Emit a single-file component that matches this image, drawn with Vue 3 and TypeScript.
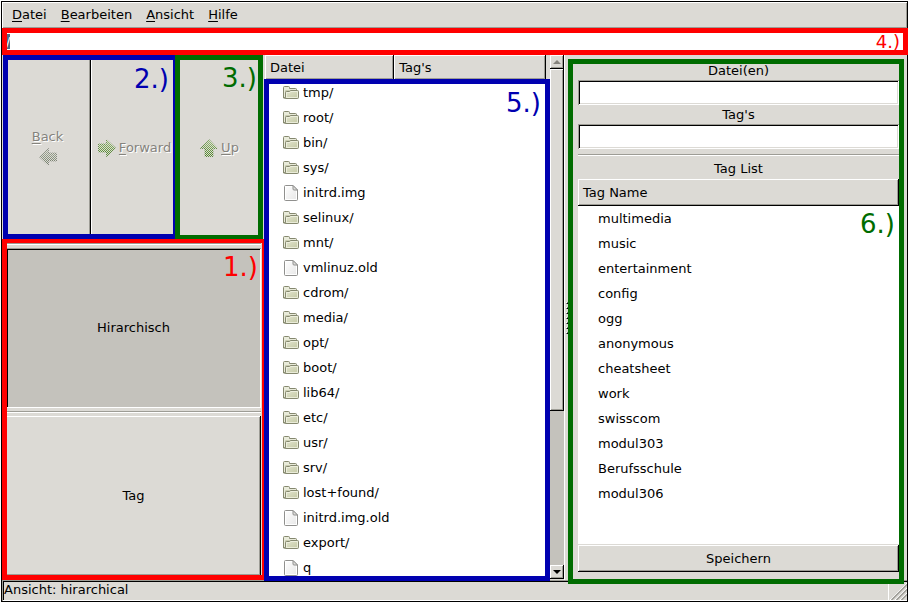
<script setup lang="ts">
import { onMounted, ref } from 'vue'

interface Entry {
  name: string
  folder: boolean
}

const menus: string[] = ['Datei', 'Bearbeiten', 'Ansicht', 'Hilfe']

const names: string[] = [
  'tmp/', 'root/', 'bin/', 'sys/', 'initrd.img', 'selinux/', 'mnt/',
  'vmlinuz.old', 'cdrom/', 'media/', 'opt/', 'boot/', 'lib64/', 'etc/',
  'usr/', 'srv/', 'lost+found/', 'initrd.img.old', 'export/', 'q',
]
const entries: Entry[] = names.map((name) => ({ name, folder: name.endsWith('/') }))

const tags: string[] = [
  'multimedia', 'music', 'entertainment', 'config', 'ogg', 'anonymous',
  'cheatsheet', 'work', 'swisscom', 'modul303', 'Berufsschule', 'modul306',
]

const path = ref('/')
const fileNames = ref('')
const fileTags = ref('')
const mode = ref<'tree' | 'tag'>('tree')
const pathInput = ref<HTMLInputElement | null>(null)

onMounted(() => {
  pathInput.value?.focus()
  pathInput.value?.select()
})
</script>

<template>
  <div class="window">
    <svg class="defs" aria-hidden="true">
      <defs>
        <pattern id="dither" width="2" height="2" patternUnits="userSpaceOnUse">
          <rect width="1" height="1" fill="#dcdad5" />
          <rect x="1" y="1" width="1" height="1" fill="#dcdad5" />
        </pattern>
        <linearGradient id="arrow-green" x2="0" y2="1">
          <stop offset="0" stop-color="#9cc07c" />
          <stop offset="1" stop-color="#4c8423" />
        </linearGradient>
        <linearGradient id="arrow-gray" x2="0" y2="1">
          <stop offset="0" stop-color="#a9b39f" />
          <stop offset="1" stop-color="#6f7a66" />
        </linearGradient>
        <linearGradient id="folder-front" x2="1" y2="1">
          <stop offset="0" stop-color="#e4e6d2" />
          <stop offset="1" stop-color="#c3c8a2" />
        </linearGradient>
        <linearGradient id="paper" x2="1" y2="1">
          <stop offset="0" stop-color="#fff" />
          <stop offset="1" stop-color="#e6e6e6" />
        </linearGradient>
      </defs>
    </svg>

    <nav class="menubar">
      <button v-for="m in menus" :key="m" type="button" class="menu"><u>{{ m.charAt(0) }}</u>{{ m.slice(1) }}</button>
    </nav>

    <div class="location">
      <input ref="pathInput" v-model="path" class="path" type="text" aria-label="Pfad" spellcheck="false" />
      <div class="frame red f4"><span class="num small">4.)</span></div>
    </div>

    <main class="main">
      <section class="side">
        <div class="toolbar">
          <div class="history">
            <button type="button" class="raised tool stacked" disabled>
              <span><u>B</u>ack</span>
              <svg class="arrow" viewBox="0 0 18 18" aria-hidden="true">
                <path d="M0.500 9 9.500 0.500v4.500h8v8h-8v4.500z" fill="url(#arrow-gray)" />
                <path d="M0.500 9 9.500 0.500v4.500h8v8h-8v4.500z" fill="none" stroke="#6b6f66" stroke-opacity="0.6" />
                <path d="M0 0h18v18H0z" fill="url(#dither)" />
              </svg>
            </button>
            <button type="button" class="raised tool" disabled>
              <svg class="arrow" viewBox="0 0 18 18" aria-hidden="true">
                <path d="M17.500 9 8.500 0.500v4.500h-8v8h8v4.500z" fill="url(#arrow-green)" />
                <path d="M17.500 9 8.500 0.500v4.500h-8v8h8v4.500z" fill="none" stroke="#3b6e1d" stroke-opacity="0.6" />
                <path d="M0 0h18v18H0z" fill="url(#dither)" />
              </svg>
              <span><u>F</u>orward</span>
            </button>
            <div class="frame blue f2"><span class="num">2.)</span></div>
          </div>
          <div class="up">
            <button type="button" class="raised tool" disabled>
              <svg class="arrow" viewBox="0 0 18 18" aria-hidden="true">
                <path d="M9 0.500 17.500 9.500H13v8H5v-8H0.500z" fill="url(#arrow-green)" />
                <path d="M9 0.500 17.500 9.500H13v8H5v-8H0.500z" fill="none" stroke="#3b6e1d" stroke-opacity="0.6" />
                <path d="M0 0h18v18H0z" fill="url(#dither)" />
              </svg>
              <span><u>U</u>p</span>
            </button>
            <div class="frame green f3"><span class="num">3.)</span></div>
          </div>
        </div>

        <div class="modes">
          <hr />
          <button type="button" class="raised mode" :class="{ pressed: mode === 'tree' }" @click="mode = 'tree'">Hirarchisch</button>
          <hr />
          <button type="button" class="raised mode" :class="{ pressed: mode === 'tag' }" @click="mode = 'tag'">Tag</button>
          <div class="frame red f1"><span class="num">1.)</span></div>
        </div>
      </section>

      <section class="browser">
        <div class="files">
          <table class="list file-table">
            <thead>
              <tr><th class="col-name">Datei</th><th>Tag's</th></tr>
            </thead>
            <tbody>
              <tr v-for="e in entries" :key="e.name">
                <td>
                  <div class="entry">
                    <svg v-if="e.folder" class="icon" viewBox="0 0 16 16" aria-hidden="true">
                      <path d="M0.500 13V2.500q0-1 1-1h4q1 0 1 1v1h6q1 0 1 1V13z" fill="#e9ebda" stroke="#85886f" />
                      <path d="M2.500 12V5.500h9.500" fill="none" stroke="#c9ccb0" />
                      <path d="M2.500 12.500V7.500q0-1 1-1h3l1-1h7q1 0 1 1v6q0 1-1 1h-12q-1 0-1-1z" fill="url(#folder-front)" stroke="#85886f" />
                      <path d="M3.500 12.500V7.500H7l1-1h6.500v6z" fill="none" stroke="#f1f3e4" stroke-opacity="0.8" />
                    </svg>
                    <svg v-else class="icon" viewBox="0 0 16 16" aria-hidden="true">
                      <path d="M1.500 1.500q0-1 1-1H10l4.500 4.500v9.500q0 1-1 1h-11q-1 0-1-1z" fill="url(#paper)" stroke="#90908e" />
                      <path d="M2.500 14.500v-13H9.500M2.500 14.500h11V6" fill="none" stroke="#fff" />
                      <path d="M10 0.500v3.500q0 1 1 1h3.500z" fill="#dededc" stroke="#90908e" />
                    </svg>
                    <span>{{ e.name }}</span>
                  </div>
                </td>
                <td></td>
              </tr>
            </tbody>
          </table>
          <div class="frame blue f5"><span class="num">5.)</span></div>
        </div>
        <div class="scrollbar">
          <button type="button" class="raised step" aria-label="Nach oben">
            <svg viewBox="0 0 8 4" aria-hidden="true"><path d="M4 0 8 4H0z" fill="#85837d" /></svg>
          </button>
          <div class="trough"><div class="raised thumb"></div></div>
          <button type="button" class="raised step" aria-label="Nach unten">
            <svg viewBox="0 0 8 4" aria-hidden="true"><path d="M0 0h8L4 4z" fill="#000" /></svg>
          </button>
        </div>
      </section>

      <div class="splitter"><i v-for="n in 7" :key="n"></i></div>

      <section class="editor">
        <label class="caption" for="file-names">Datei(en)</label>
        <input id="file-names" v-model="fileNames" class="field" type="text" />
        <label class="caption" for="file-tags">Tag's</label>
        <input id="file-tags" v-model="fileTags" class="field" type="text" />
        <hr />
        <h2 class="title">Tag List</h2>
        <div class="tag-list">
          <table class="list tag-table">
            <thead>
              <tr><th>Tag Name</th></tr>
            </thead>
            <tbody>
              <tr v-for="t in tags" :key="t"><td>{{ t }}</td></tr>
            </tbody>
          </table>
        </div>
        <button type="button" class="raised save">Speichern</button>
        <div class="frame green f6"><span class="num">6.)</span></div>
      </section>
    </main>

    <footer class="status">
      <span class="message">Ansicht: hirarchical</span>
      <svg class="grip" viewBox="0 0 18 18" aria-hidden="true">
        <path d="M1 18 18 1M6 18 18 6M11 18 18 11" stroke="#fff" stroke-width="1" />
        <path d="M2.500 18 18 2.500M7.500 18 18 7.500M12.500 18l5.500-5.500" stroke="#9d9c95" stroke-width="1.500" />
      </svg>
    </footer>
  </div>
</template>

<style>
body {
  margin: 0;
  background: #fff;
}
</style>

<style scoped>
* {
  box-sizing: border-box;
}

.window {
  display: flex;
  flex-direction: column;
  height: calc(100vh - 2px);
  margin: 1px;
  border: 1px solid #000;
  background: #dcdad5;
  color: #000;
  font: 13px/16px "DejaVu Sans", sans-serif;
}

.defs {
  position: absolute;
  width: 0;
  height: 0;
}

button,
input {
  margin: 0;
  padding: 0;
  border: 0;
  border-radius: 0;
  outline: none;
  background: none;
  color: inherit;
  font: inherit;
}

u {
  text-underline-offset: 2px;
}

hr {
  flex: none;
  width: 100%;
  height: 2px;
  margin: 0;
  border: 0;
  border-top: 1px solid #9d9c95;
  background: #fff;
}

.raised {
  background: #dcdad5;
  box-shadow: inset -1px -1px #000, inset 1px 1px #fff, inset -2px -2px #9d9c95;
}

/* Numbered callouts */
.frame {
  position: absolute;
  z-index: 2;
  border: 5px solid;
  pointer-events: none;
}

.red { color: #f00; }
.blue { color: #0000b0; }
.green { color: #006c00; }

.num {
  position: absolute;
  top: 5px;
  right: 4px;
  font-size: 26px;
  line-height: 28px;
}

.small {
  top: 0;
  right: 3px;
  font-size: 18px;
  line-height: 18px;
}

.f1 { inset: -1px -3px 0 0; border-top-width: 4px; }
.f1 .num { top: 10px; }
.f2 { inset: 0 0 1px -1px; }
.f3 { inset: 0 -2px 0 -3px; }
.f3 .num { top: 4px; right: 1px; }
.f4 { inset: 0 -1px 0 0; }
.f5 { inset: 24px 0 -1px 0; }
.f6 { inset: 4px 3px -4px -1px; }
.f6 .num { top: 146px; }

/* Menu and path */
.menubar {
  display: flex;
  flex: none;
  height: 26px;
  padding-left: 3px;
  box-shadow: inset 1px 1px #fff, inset -1px -1px #9d9c95;
}

.menu {
  padding: 0 7px;
}

.location {
  position: relative;
  flex: none;
  height: 27px;
  background: #fff;
}

.path {
  display: block;
  width: 100%;
  height: 27px;
  padding: 0 4px;
}

.path::selection {
  background: #4b6983;
  color: #fff;
}

/* Body */
.main {
  display: flex;
  flex: 1;
  min-height: 0;
}

.side {
  display: grid;
  grid-template-rows: 185fr 340fr;
  flex: none;
  width: 262px;
}

.toolbar {
  display: flex;
  padding: 0 3px 0 2px;
}

.history,
.up {
  position: relative;
  display: flex;
}

.history { flex: 174; }
.up { flex: 83; }

.tool {
  display: flex;
  flex: 1;
  align-items: center;
  justify-content: center;
  gap: 3px;
  color: #85837d;
  text-shadow: 1px 1px #fff;
}

.stacked {
  flex-direction: column;
}

.arrow {
  flex: none;
  width: 18px;
  height: 18px;
}

.modes {
  position: relative;
  display: flex;
  flex-direction: column;
  gap: 3px;
  padding: 3px 3px 4px 4px;
}

.mode {
  flex: 1;
}

.pressed {
  background: #c4c2bc;
  box-shadow: inset 0 1px #9d9c95, inset -1px -1px #fff, inset 2px 2px #000;
}

/* Tables */
.list {
  width: 100%;
  border-collapse: separate;
  border-spacing: 0;
  table-layout: fixed;
  background: #fff;
}

.list th {
  height: 27px;
  padding: 0 5px;
  background: #dcdad5;
  box-shadow: inset -1px -1px #000, inset 1px 1px #fff, inset -2px -2px #9d9c95;
  font-weight: normal;
  text-align: left;
}

.list td {
  height: 25px;
  padding: 0 0 0 20px;
}

.browser {
  display: flex;
  flex: none;
  width: 300px;
}

.files {
  position: relative;
  flex: 1;
  padding: 0 4px 0 1px;
  height: 100%;
  contain: size;
}

.file-table {
  display: block;
  height: 100%;
  overflow: hidden;
}

.file-table thead,
.file-table tbody {
  display: table;
  width: 100%;
  table-layout: fixed;
}

.file-table th {
  height: 25px;
}

.file-table .col-name {
  width: 46%;
}

.file-table td {
  padding-left: 18px;
}

.entry {
  display: flex;
  align-items: center;
  gap: 4px;
}

.icon {
  flex: none;
  width: 16px;
  height: 16px;
}

.scrollbar {
  display: flex;
  flex-direction: column;
  width: 14px;
  padding-bottom: 1px;
}

.step {
  display: flex;
  flex: none;
  align-items: center;
  justify-content: center;
  height: 14px;
}

.step svg {
  width: 8px;
  height: 4px;
}

.trough {
  flex: 1;
  background: #c4c2bc;
}

.thumb {
  height: 69%;
}

.splitter {
  display: flex;
  flex: none;
  flex-direction: column;
  align-items: flex-end;
  justify-content: center;
  gap: 3px;
  width: 5px;
  padding-right: 1px;
  border-left: 1px solid #fff;
}

.splitter i {
  width: 2px;
  height: 2px;
  border: 1px solid #fff;
  border-right-color: #000;
  border-bottom-color: #000;
}

/* Tag editor */
.editor {
  position: relative;
  display: flex;
  flex: 1;
  flex-direction: column;
  min-width: 0;
  padding: 6px 8px 8px 9px;
}

.caption {
  height: 19px;
  line-height: 19px;
  text-align: center;
}

.field {
  flex: none;
  width: 100%;
  height: 25px;
  padding: 0 4px;
  background: #fff;
  box-shadow: inset 0 1px #9d9c95, inset 1px 0 #9d9c95, inset -1px -1px #fff, inset 2px 2px #000, inset -2px -2px #dcdad5;
}

.editor hr {
  margin-top: 5px;
}

.title {
  margin: 0;
  padding: 5px 0 2px;
  font-size: 13px;
  font-weight: normal;
  text-align: center;
}

.tag-list {
  flex: 1;
  min-height: 0;
  overflow: hidden;
  border-bottom: 1px solid #dcdad5;
  background: #fff;
}

.save {
  flex: none;
  height: 27px;
}

/* Status bar */
.status {
  display: flex;
  flex: none;
  height: 21px;
  padding-left: 2px;
  box-shadow: inset 1px 1px #9d9c95, inset 0 -1px #fff, inset 2px 2px #000;
}

.message {
  flex: 1;
  line-height: 20px;
  border-right: 1px solid #fff;
}

.grip {
  width: 18px;
  height: 18px;
  margin-top: 2px;
}
</style>
